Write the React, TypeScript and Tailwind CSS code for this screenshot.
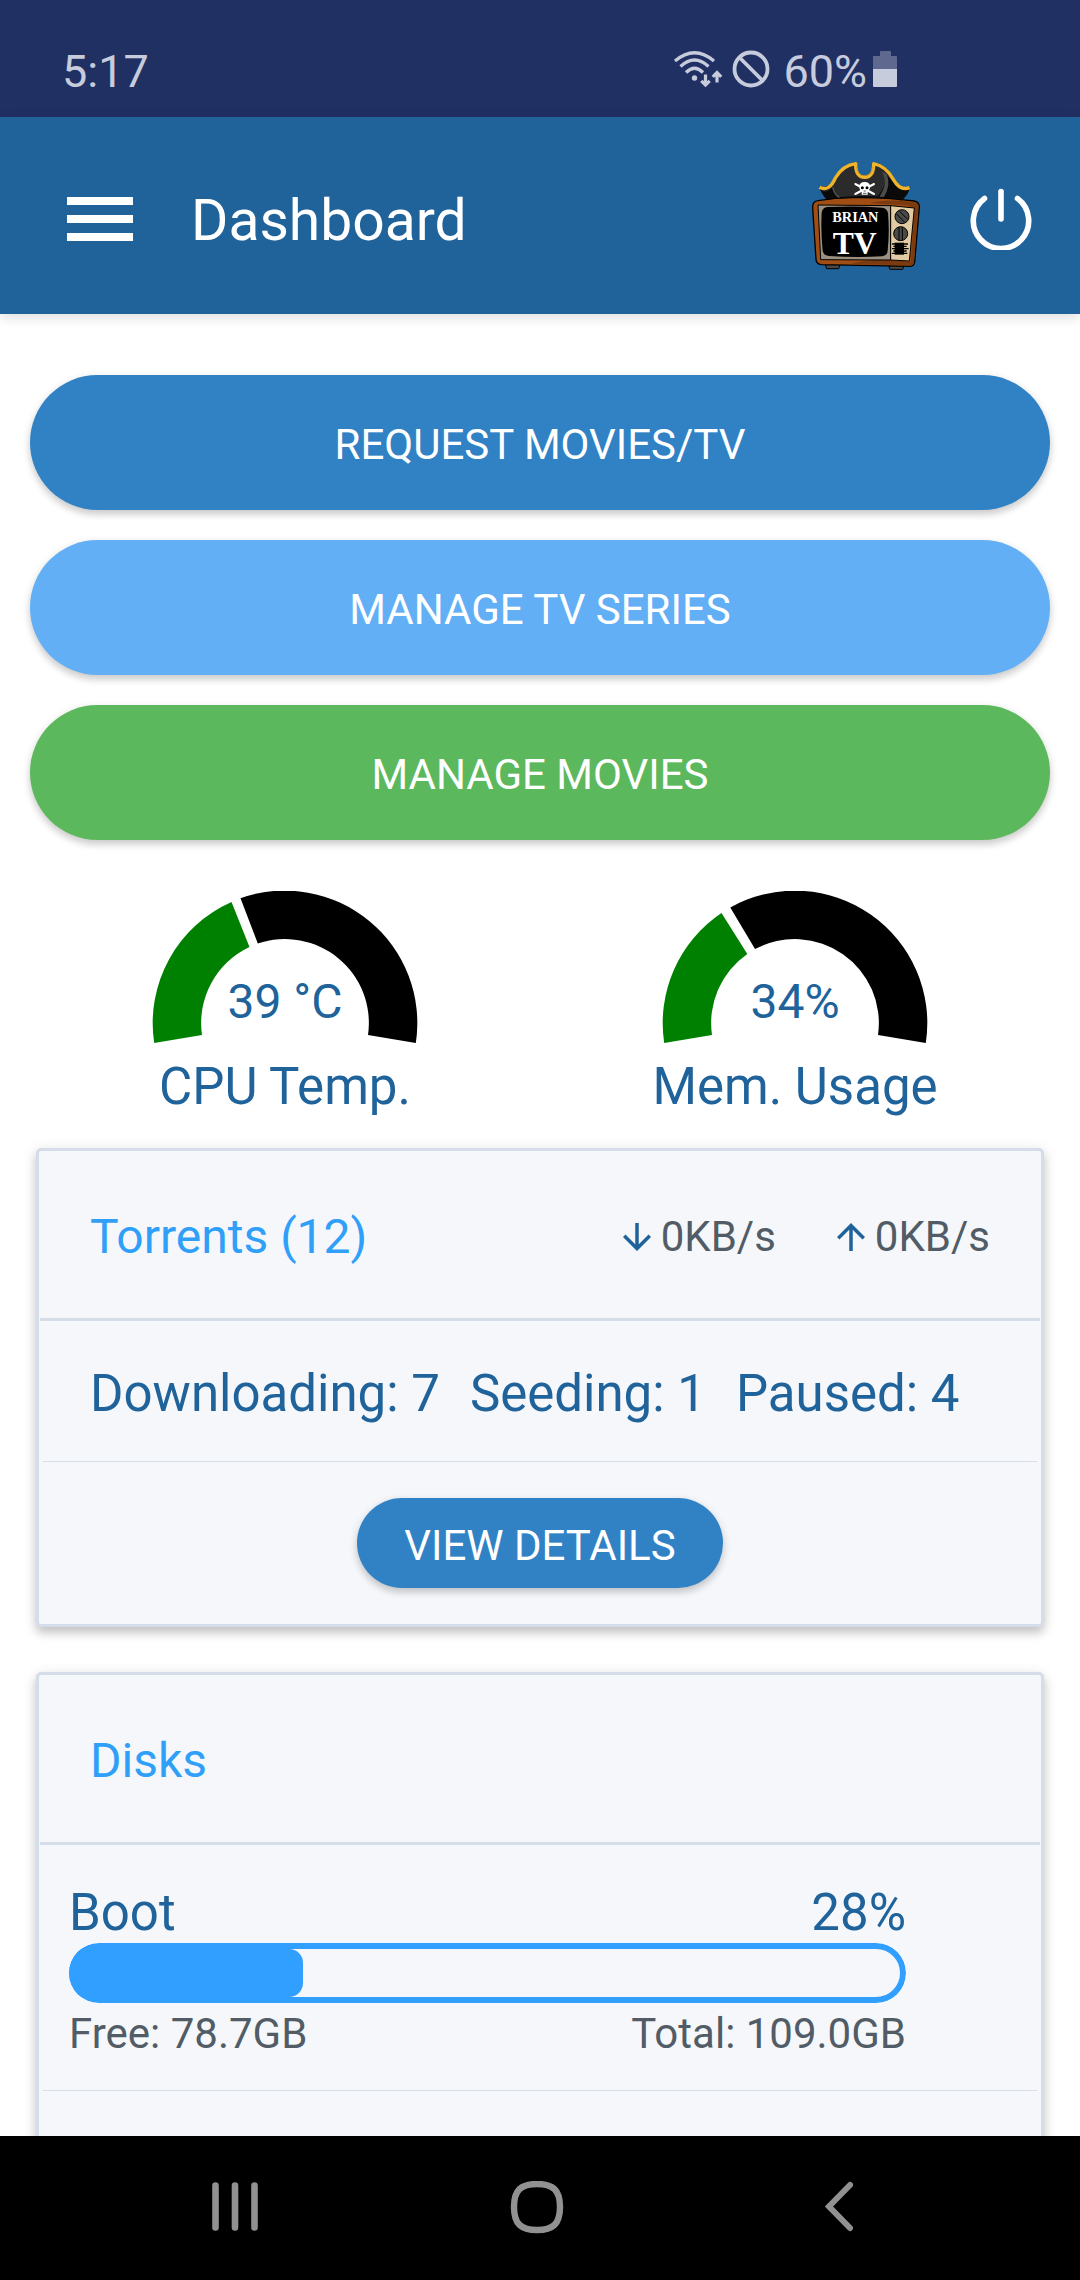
import type { ReactNode } from "react";

function WifiIcon() {
  return (
    <svg width="50" height="44" viewBox="674 50 50 44" fill="none" stroke="#C7CCDD" strokeWidth="3.2">
      <path d="M676 61 Q695.500 44.500 715 61" />
      <path d="M681.500 66.500 Q695.500 53.500 709.500 66.500" />
      <path d="M687 72.500 Q695.500 64 704 72.500" />
      <circle cx="695.500" cy="78" r="2.700" fill="#C7CCDD" stroke="none" />
      <path d="M706.500 74.500 V84.500 M702.300 80.800 L706.500 85 L710.700 80.800" />
      <path d="M718 82.500 V73 M713.800 76.800 L718 72.500 L722.200 76.800" />
    </svg>
  );
}

function BlockedIcon() {
  return (
    <svg width="40" height="44" viewBox="732 50 40 44" fill="none" stroke="#C7CCDD" strokeWidth="3.8">
      <circle cx="752" cy="69" r="16.500" />
      <path d="M740.500 57.500 L763.500 80.500" />
    </svg>
  );
}

function BatteryIcon() {
  return (
    <svg width="24" height="44" viewBox="873 50 24 44">
      <path d="M880 56 V52 q0 -1 1 -1 h9 q1 0 1 1 V56 H896 q1 0 1 1 V69 H873 V57 q0 -1 1 -1 Z" fill="#5F6990" />
      <path d="M873 69 H897 V86 q0 1 -1 1 H874 q-1 0 -1 -1 Z" fill="#C7CCDD" />
    </svg>
  );
}

function PirateTvLogo() {
  return (
    <svg width="108" height="113" viewBox="66 66 324 339" role="img" aria-label="Brian TV">
      {/* feet */}
      <path d="M106 374 h44 l-4 12 h-36 Z M296 377 h46 l-4 11 h-38 Z" fill="#4A4A4A" stroke="#000" strokeWidth="3" />
      {/* cabinet */}
      <path
        d="M84 182 Q140 172 196 173 Q290 172 372 183 Q388 186 388 200 L374 366 Q372 379 360 379 L94 374 Q79 372 78 358 L68 204 Q67 184 84 182 Z"
        fill="#A04E13"
        stroke="#000"
        strokeWidth="4"
      />
      <path d="M240 190 Q290 176 372 186 Q386 188 385 200 L372 364 Q370 376 358 376 L180 373 Q250 350 362 366 L374 204 L350 196 Z" fill="#7C3A10" />
      {/* screen bezel and control panel */}
      <path d="M84 195 L302 197 V360 L92 359 Z" fill="#9C8F80" stroke="#000" strokeWidth="3" />
      <path d="M302 197 L373 204 L358 363 L302 360 Z" fill="#E3CBA4" stroke="#000" strokeWidth="3" />
      <path
        d="M112 201 Q200 197 276 203 Q292 205 294 220 Q299 275 293 332 Q291 347 276 349 Q200 354 116 348 Q101 346 98 332 Q92 275 95 218 Q97 203 112 201 Z"
        fill="#000"
      />
      <g stroke="#000" strokeWidth="3" fill="#4A4A48">
        <circle cx="336" cy="230" r="21" />
        <circle cx="332" cy="281" r="21" />
        <path d="M320 222 L344 247 M328 213 L353 238 M327 261 V301 M337 261 V301" />
      </g>
      <path
        d="M306 312 H354 M310 319 H350 M306 326 H356 M310 333 H350 M306 340 H352"
        stroke="#000"
        strokeWidth="4"
      />
      <path d="M314 308 H342 V344 H314 Z" fill="#000" />
      {/* hat */}
      <path
        d="M88 140 Q118 150 136 112 Q158 72 196 68 Q194 110 224 110 Q254 110 252 68 Q290 74 312 116 Q330 150 360 142 Q352 166 336 180 Q290 170 224 170 Q160 170 110 178 Q98 164 88 140 Z"
        fill="#2B2B2B"
        stroke="#000"
        strokeWidth="3"
      />
      <path d="M286 100 Q330 156 356 150 Q348 168 336 178 L262 170 Q290 140 286 100 Z" fill="#0A0A0A" />
      <path d="M276 96 Q296 130 268 170 L282 171 Q304 134 290 102 Z" fill="#4C4C4C" />
      <path d="M92 152 Q112 160 128 142 Q130 160 144 172 L110 178 Z" fill="#0A0A0A" />
      <path d="M128 142 Q132 162 148 172" fill="none" stroke="#555" strokeWidth="4" />
      <path
        d="M88 142 Q118 156 136 114 Q158 76 197 71 Q196 112 224 112 Q252 112 251 71 Q288 78 310 118 Q330 154 359 143"
        fill="none"
        stroke="#F0B42C"
        strokeWidth="10"
        strokeLinejoin="round"
      />
      <path d="M200 80 Q202 108 224 107 Q246 106 247 80" fill="none" stroke="#C98912" strokeWidth="2" />
      {/* skull and crossbones */}
      <path d="M196 132 L252 162 M252 132 L196 162" stroke="#FFF" strokeWidth="6" strokeLinecap="round" />
      <path d="M208 140 Q208 126 224 126 Q240 126 240 140 Q240 150 233 152 V164 H215 V152 Q208 150 208 140 Z" fill="#FFF" />
      <circle cx="217" cy="143" r="4.500" fill="#000" />
      <circle cx="231" cy="143" r="4.500" fill="#000" />
      <path d="M221 153 h6 M219 160 h10" stroke="#000" strokeWidth="2" />
      <text x="196" y="247" textAnchor="middle" fill="#FFF" fontSize="43" fontWeight="700" fontFamily="'Liberation Serif', serif">
        BRIAN
      </text>
      <text x="194" y="341" textAnchor="middle" fill="#FFF" fontSize="95" fontWeight="700" fontFamily="'Liberation Serif', serif">
        TV
      </text>
    </svg>
  );
}

function PowerIcon() {
  return (
    <svg width="62" height="62" viewBox="0 0 62 62" fill="none" stroke="#FFF" strokeWidth="5.6" strokeLinecap="round">
      <path d="M14.500 10.500 A27.700 27.700 0 1 0 47.500 10.500" />
      <path d="M31 3.500 V31" />
    </svg>
  );
}

function ArrowIcon({ up = false }: { up?: boolean }) {
  return (
    <svg width="42" height="42" viewBox="0 0 24 24" fill="#20639B">
      {up ? (
        <path d="M4 12l1.410 1.410L11 7.830V20h2V7.830l5.580 5.590L20 12l-8-8-8 8z" />
      ) : (
        <path d="M20 12l-1.410-1.410L13 16.170V4h-2v12.170l-5.580-5.590L4 12l8 8 8-8z" />
      )}
    </svg>
  );
}

type GaugeProps = { value: string; label: string; filled: string; rest: string };

function Gauge({ value, label, filled, rest }: GaugeProps) {
  return (
    <div className="flex flex-col items-center gap-[13px] text-[#20639B]">
      <div className="relative">
        <svg width="266" height="153" viewBox="-133 -132 266 153">
          <path d={filled} fill="#008000" />
          <path d={rest} fill="#000" />
        </svg>
        <span className="absolute inset-x-0 bottom-3 text-center text-[48px] leading-[60px]">{value}</span>
      </div>
      <span className="text-[51px] leading-[60px]">{label}</span>
    </div>
  );
}

function Card({ title, extra, children }: { title: string; extra?: ReactNode; children: ReactNode }) {
  return (
    <section className="mx-1.5 rounded-[5px] border-[3px] border-[#D5DDE8] bg-[#F5F7FB] shadow-[0_6px_9px_0_rgba(0,0,0,0.16),0_3px_15px_0_rgba(0,0,0,0.12)]">
      <header className="mx-px flex items-center justify-between border-b-[3px] border-[#D5DDE8] px-[50px] pt-14 pb-[51px]">
        <h2 className="text-[48px] leading-[60px] text-[#309FF8]">{title}</h2>
        {extra}
      </header>
      <div className="mx-1">{children}</div>
    </section>
  );
}

function Speed({ up, value }: { up?: boolean; value: string }) {
  return (
    <span className="flex items-center gap-[3px] text-[42px] leading-[60px] text-[#515C66]">
      <ArrowIcon up={up} />
      {value}
    </span>
  );
}

function Disk({ name, percent, free, total }: { name: string; percent: number; free: string; total: string }) {
  return (
    <div className="border-b border-[#D5DDE8] pt-[38px] pr-[131px] pb-[26px] pl-[26px]">
      <div className="flex justify-between text-[51px] leading-[60px] text-[#20639B]">
        <span>{name}</span>
        <span>{percent}%</span>
      </div>
      <div
        role="progressbar"
        aria-label={name}
        aria-valuenow={percent}
        aria-valuemin={0}
        aria-valuemax={100}
        className="grid h-[60px] overflow-hidden rounded-full"
      >
        <div className="col-start-1 row-start-1 rounded-full border-[6px] border-[#309FFF]" />
        <div className="col-start-1 row-start-1 my-1.5 rounded-r-[14px] bg-[#309FFF]" style={{ width: `${percent}%` }} />
      </div>
      <div className="mt-px flex justify-between text-[42px] leading-[60px] text-[#515C66]">
        <span>Free: {free}</span>
        <span>Total: {total}</span>
      </div>
    </div>
  );
}

const buttonShadow = "shadow-[0_3px_9px_0_rgba(0,0,0,0.18),0_6px_6px_0_rgba(0,0,0,0.06)]";
const actionButton = `w-full rounded-full pt-10 pb-[35px] text-[42px] leading-[60px] text-white ${buttonShadow}`;

export default function App() {
  return (
    <div className="flex h-screen flex-col overflow-hidden bg-white font-['Roboto',sans-serif]">
      <div className="flex shrink-0 items-center justify-between bg-[#213063] pt-[42px] pr-[183px] pb-[15px] pl-[62px] text-[45px] leading-[60px] text-[#C7CCDD]">
        <span>5:17</span>
        <div className="flex items-center">
          <WifiIcon />
          <span className="ml-2">
            <BlockedIcon />
          </span>
          <span className="ml-3">60%</span>
          <span className="ml-1.5">
            <BatteryIcon />
          </span>
        </div>
      </div>

      <header className="z-10 flex shrink-0 items-center bg-[#20639B] pt-[45px] pr-12 pb-[39px] pl-[67px] shadow-[0_3px_12px_0_rgba(0,0,0,0.14)]">
        <button aria-label="Menu" className="flex w-[66px] flex-col gap-2.5">
          <span className="h-2 w-full bg-white" />
          <span className="h-2 w-full bg-white" />
          <span className="h-2 w-full bg-white" />
        </button>
        <h1 className="ml-[58px] flex-1 pt-1 text-[57px] leading-[72px] text-white">Dashboard</h1>
        <PirateTvLogo />
        <button aria-label="Power" className="ml-[50px]">
          <PowerIcon />
        </button>
      </header>

      <main className="min-h-0 flex-1 overflow-hidden px-[30px] pt-[61px]">
        <div className="flex flex-col gap-[30px]">
          <button className={`${actionButton} bg-[#3082C5]`}>REQUEST MOVIES/TV</button>
          <button className={`${actionButton} bg-[#62AFF5]`}>MANAGE TV SERIES</button>
          <button className={`${actionButton} bg-[#5CB85C]`}>MANAGE MOVIES</button>
        </div>

        <div className="mt-[51px] mb-[31px] grid grid-cols-2">
          <Gauge
            value="39 °C"
            label="CPU Temp."
            filled="M-130.800 20 A132.400 132.400 0 0 1 -53.500 -121 L-35.500 -76 A84 84 0 0 0 -83 12 Z"
            rest="M-44.500 -124.700 A132.400 132.400 0 0 1 130.800 20 L83 12 A84 84 0 0 0 -27.200 -79.500 Z"
          />
          <Gauge
            value="34%"
            label="Mem. Usage"
            filled="M-130.800 20 A132.400 132.400 0 0 1 -73.500 -110 L-47.700 -69 A84 84 0 0 0 -83 12 Z"
            rest="M-64.700 -115.500 A132.400 132.400 0 0 1 130.800 20 L83 12 A84 84 0 0 0 -40 -73.900 Z"
          />
        </div>

        <div className="flex flex-col gap-[45px]">
          <Card
            title="Torrents (12)"
            extra={
              <div className="flex gap-[54px]">
                <Speed value="0KB/s" />
                <Speed up value="0KB/s" />
              </div>
            }
          >
            <div className="flex gap-[30px] border-b border-[#D5DDE8] pt-[43px] pb-[37px] pl-[47px] text-[51px] leading-[60px] whitespace-nowrap text-[#20639B]">
              <span>Downloading: 7</span>
              <span>Seeding: 1</span>
              <span>Paused: 4</span>
            </div>
            <div className="flex justify-center py-9">
              <button className={`rounded-full bg-[#3082C5] px-[47px] pt-[18px] pb-3 text-[42px] leading-[60px] text-white ${buttonShadow}`}>
                VIEW DETAILS
              </button>
            </div>
          </Card>

          <Card title="Disks">
            <Disk name="Boot" percent={28} free="78.7GB" total="109.0GB" />
            <div className="h-40" />
          </Card>
        </div>
      </main>

      <nav className="z-10 grid shrink-0 grid-cols-3 bg-black py-[45px] pr-[90px] pl-[84px]" aria-label="System navigation">
        <button aria-label="Recent apps" className="flex justify-center">
          <svg width="54" height="54" viewBox="0 0 54 54" stroke="#919191" strokeWidth="6.6" strokeLinecap="round">
            <path d="M7.500 4.500 V46.500 M27 4.500 V46.500 M46.500 4.500 V46.500" />
          </svg>
        </button>
        <button aria-label="Home" className="flex justify-center">
          <svg width="54" height="54" viewBox="0 0 54 54" fill="none" stroke="#919191" strokeWidth="6.400">
            <path d="M27 3 C43 3 50 9 50 26 C50 43 43 49 27 49 C11 49 4 43 4 26 C4 9 11 3 27 3 Z" />
          </svg>
        </button>
        <button aria-label="Back" className="flex justify-center">
          <svg width="54" height="54" viewBox="0 0 54 54" fill="none" stroke="#919191" strokeWidth="6" strokeLinecap="round">
            <path d="M38 4 L17 25.500 L38 47" />
          </svg>
        </button>
      </nav>
    </div>
  );
}
